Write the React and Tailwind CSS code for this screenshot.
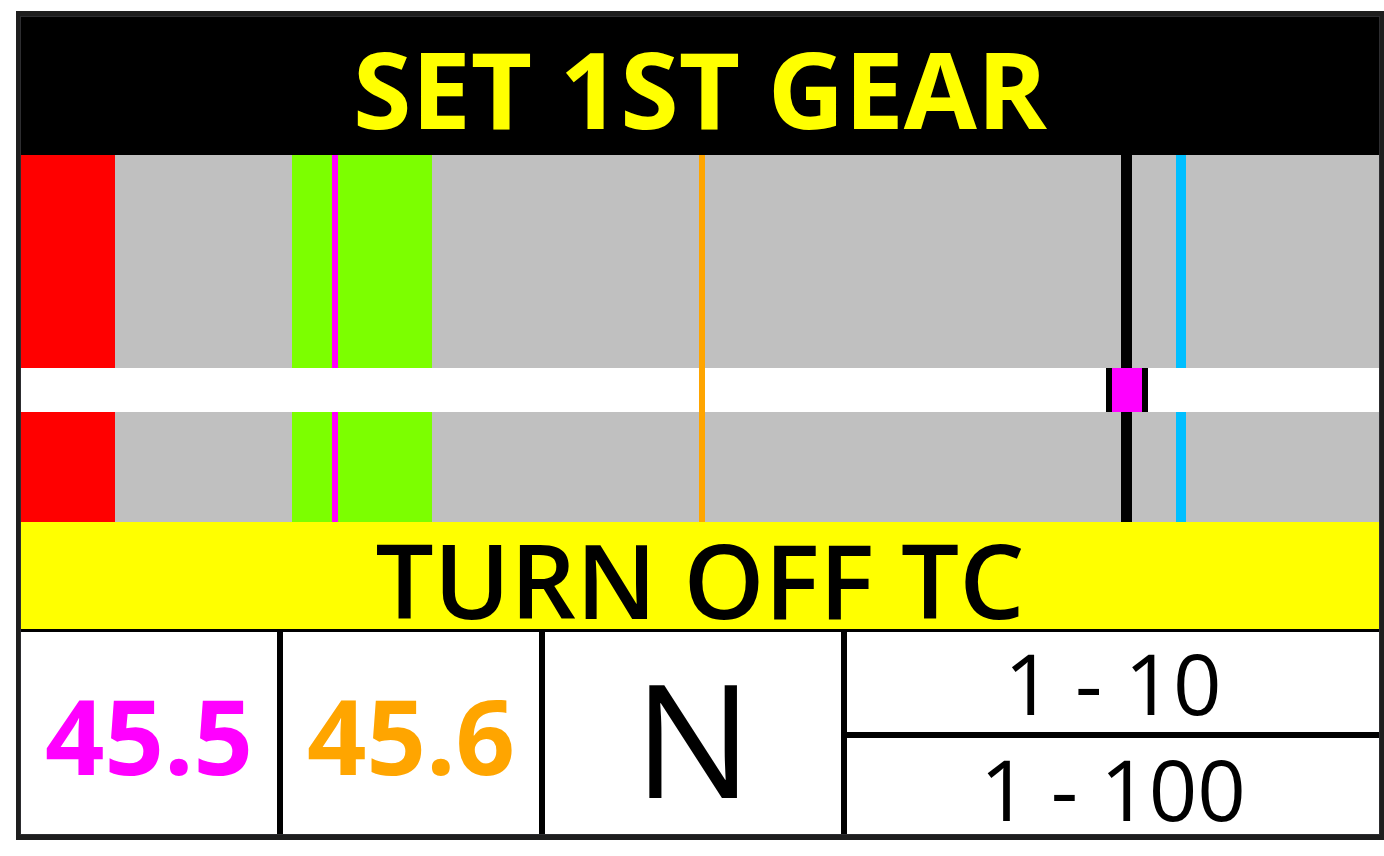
const SEGMENTS = [
  { width: 94, color: "bg-[#ff0000]" },
  { width: 177, color: "bg-[#c0c0c0]" },
  { width: 40, color: "bg-[#7cff00]" },
  { width: 6, color: "bg-[#ff00ff]" },
  { width: 94, color: "bg-[#7cff00]" },
  { width: 267, color: "bg-[#c0c0c0]" },
  { width: 6, color: "bg-[#ffa500]" },
  { width: 416, color: "bg-[#c0c0c0]" },
  { width: 11, color: "bg-black" },
  { width: 44, color: "bg-[#c0c0c0]" },
  { width: 10, color: "bg-[#00bfff]" },
  { width: 193, color: "bg-[#c0c0c0]" },
];

const POINTER = [
  { width: 678, color: "bg-white" },
  { width: 6, color: "bg-[#ffa500]" },
  { width: 401, color: "bg-white" },
  { width: 6, color: "bg-black" },
  { width: 30, color: "bg-[#ff00ff]" },
  { width: 6, color: "bg-black" },
  { width: 231, color: "bg-white" },
];

function Band({ parts, height }) {
  return (
    <div className={`flex ${height}`}>
      {parts.map((part, i) => (
        <div key={i} className={part.color} style={{ flex: `${part.width} 1 0px` }} />
      ))}
    </div>
  );
}

export default function App() {
  return (
    <main className="bg-white pt-[11px] pb-4 pl-4 font-['Open_Sans','Noto_Sans',sans-serif] whitespace-nowrap">
      <div className="border-4 border-t-5 border-b-5 border-[#1e1e1e]">
        <div className="border border-[#2d2d30]">
          <h1 className="flex h-[138px] items-center justify-center bg-black pt-1 text-[106px] leading-none font-bold text-[#ffff00]">
            SET 1ST GEAR
          </h1>

          <section aria-label="Clutch position">
            <Band parts={SEGMENTS} height="h-[213px]" />
            <Band parts={POINTER} height="h-[44px]" />
            <Band parts={SEGMENTS} height="h-[110px]" />
          </section>

          <p className="flex h-[107px] items-center justify-center bg-[#ffff00] pt-2 text-[103px] leading-none font-semibold text-black">
            TURN OFF TC
          </p>

          <section className="grid h-[205px] grid-cols-[256fr_256fr_296fr_532fr] gap-x-[6px] bg-black pt-[3px] text-black">
            <div className="flex items-center justify-center bg-white pt-1 text-[104px] leading-none font-bold text-[#ff00ff]">
              45.5
            </div>
            <div className="flex items-center justify-center bg-white pt-1 text-[104px] leading-none font-bold text-[#ffa500]">
              45.6
            </div>
            <div className="flex items-center justify-center bg-white pt-2 text-[157px] leading-none">N</div>
            <div className="grid grid-rows-[100fr_96fr] gap-y-[6px] text-[85px] leading-none">
              <div className="flex items-center justify-center bg-white">1 - 10</div>
              <div className="flex items-center justify-center bg-white pt-1">1 - 100</div>
            </div>
          </section>
        </div>
      </div>
    </main>
  );
}
